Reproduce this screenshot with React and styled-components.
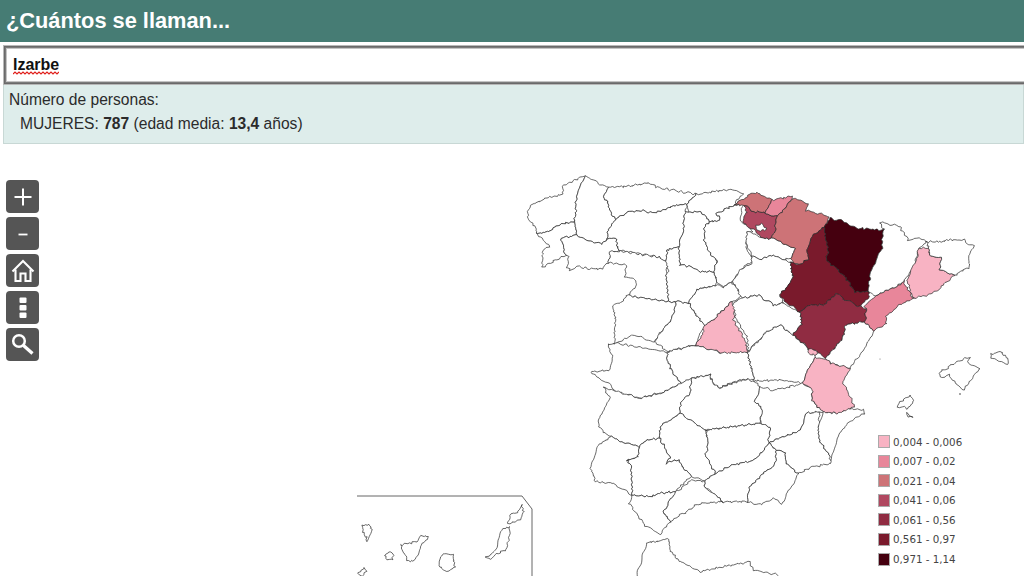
import React from 'react';
import styled, { createGlobalStyle } from 'styled-components';

const GlobalStyle = createGlobalStyle`
  html, body { margin: 0; padding: 0; height: 100%; background: #fff; overflow: hidden; }
  #root { height: 100%; }
`;

const Page = styled.div`
  display: flex;
  flex-direction: column;
  height: 576px;
  overflow: hidden;
  font-family: "Liberation Sans", Arial, sans-serif;
  color: #2b2b2b;
`;

const Header = styled.h1`
  margin: 0;
  height: 42px;
  padding: 0 6px;
  display: flex;
  align-items: center;
  background: #467c74;
  color: #fff;
  font-size: 21.8px;
  font-weight: bold;
  flex: none;
`;

const SearchWrap = styled.div`
  position: relative;
  flex: none;
  margin: 3px 0 0 3px;
  width: 1040px;
  height: 40px;
`;

const SearchBox = styled.input`
  display: block;
  box-sizing: border-box;
  width: 100%;
  height: 100%;
  padding: 0 9px;
  border: 1px solid #b8b8b8;
  box-shadow: inset 0 0 0 1px #6a6a6a, inset 0 0 0 2px #7c7c7c, inset 0 0 0 3px #c4c4c4;
  outline: none;
  background: #fff;
  color: #111;
  font-family: inherit;
  font-size: 16px;
  font-weight: bold;
`;

const SpellMark = styled.svg`
  position: absolute;
  left: 10px;
  top: 26px;
  width: 46px;
  height: 4px;
`;

const Results = styled.div`
  flex: none;
  box-sizing: border-box;
  margin-left: 3px;
  height: 59px;
  padding: 3px 5px;
  background: #deedeb;
  border: 1px solid #c8d8d5;
  border-top: none;
  font-size: 15.6px;
  line-height: 24px;
`;

const ResultRow = styled.div`
  padding-left: ${props => props.$indent || 0}px;
`;

const MapArea = styled.div`
  position: relative;
  flex: 1;
  overflow: hidden;
`;

const MapSvg = styled.svg`
  position: absolute;
  inset: 0;
  width: 1024px;
  height: 432px;
`;

const Controls = styled.div`
  position: absolute;
  left: 6px;
  top: 36px;
  display: flex;
  flex-direction: column;
  gap: 4px;
`;

const ControlButton = styled.button`
  width: 33px;
  height: 33px;
  padding: 0;
  border: none;
  border-radius: 4px;
  background: #555;
  display: flex;
  align-items: center;
  justify-content: center;
`;

const Legend = styled.ul`
  position: absolute;
  left: 878px;
  top: 291px;
  margin: 0;
  padding: 0;
  list-style: none;
  display: flex;
  flex-direction: column;
  gap: 6.6px;
`;

const LegendItem = styled.li`
  display: flex;
  align-items: center;
  gap: 3px;
  height: 13px;
  font-family: "DejaVu Sans", Verdana, sans-serif;
  font-size: 10.3px;
  color: #444;
  white-space: nowrap;
`;

const Swatch = styled.span`
  box-sizing: border-box;
  width: 12px;
  height: 13px;
  background: ${props => props.$color};
  border: 1px solid #aaa;
`;

const C1 = '#f8b3c3';
const C2 = '#e8869a';
const C3 = '#cd7377';
const C4 = '#b04860';
const C5 = '#902c42';
const C6 = '#7a1a2c';
const C7 = '#45000f';

const LEGEND = [
  [C1, '0,004 - 0,006'],
  [C2, '0,007 - 0,02'],
  [C3, '0,021 - 0,04'],
  [C4, '0,041 - 0,06'],
  [C5, '0,061 - 0,56'],
  [C6, '0,561 - 0,97'],
  [C7, '0,971 - 1,14'],
];

// coordinate frames: traced at 3x from different parts of the map
const NW = [520, 170, 1 / 3];
const NE = [730, 170, 1 / 3];
const SO = [580, 360, 1 / 3];
const CA = [350, 480, 1 / 3];
const BA = [860, 340, 1 / 3];
const PX = [0, 0, 1];

const REGIONS = [
  // north west
  [NW, '#fff', '25,125 30,105 60,95 80,85 130,70 130,45 180,25 195,17 170,80 165,152 120,165 85,185 50,190 45,170 25,150'],
  [NW, '#fff', '50,190 85,185 120,165 165,152 172,195 123,205 135,250 140,255 68,292 70,240 90,230 65,205'],
  [NW, '#fff', '195,17 170,80 165,152 172,195 215,215 245,222 262,205 265,175 285,148 270,125 265,100 250,80 265,52 235,40'],
  [NW, '#fff', '172,195 123,205 135,250 145,260 140,290 150,300 172,290 215,297 245,295 265,278 270,250 295,240 290,205 262,205 245,222 215,215'],
  [NW, '#fff', '265,52 250,80 265,100 270,125 285,148 330,125 370,122 400,130 450,112 500,100 530,73 410,52 390,38 330,48'],
  [NW, '#fff', '285,148 265,175 262,205 290,205 295,240 420,262 440,275 440,240 475,232 490,180 495,125 500,100 450,112 400,130 370,122 330,125'],
  [NW, '#fff', '530,73 500,100 505,127 540,125 570,155 600,150 590,130 620,115 670,100 645,100 670,72 640,58 600,62'],
  [NW, '#fff', '505,127 495,125 490,180 475,232 480,285 510,290 540,305 580,305 585,285 595,275 570,250 552,210 555,170 570,155 540,125'],
  [NW, '#fff', '570,155 555,170 552,210 570,250 595,275 585,285 580,305 590,335 610,350 635,335 660,300 700,270 680,240 680,190 700,185 680,165 660,150 670,100 620,115 590,130 600,150'],
  [NW, '#fff', '270,245 265,278 320,285 315,320 350,330 345,350 325,377 375,385 445,395 440,310 445,280 420,262 300,243'],
  [NW, '#fff', '440,275 445,300 440,310 445,395 470,395 505,400 530,360 585,345 590,335 580,305 540,305 510,290 480,285 475,232 440,240'],
  [NW, '#fff', '325,377 280,410 285,445 285,520 340,495 400,515 430,480 465,425 470,395 445,395 375,385'],
  [NW, '#fff', '470,395 465,425 430,480 405,515 440,545 525,525 555,470 505,400'],
  [NW, '#fff', '505,400 555,470 590,440 635,395 670,375 635,335 610,350 585,345 530,360'],
  [NW, C1, '635,395 590,440 552,470 550,495 525,525 610,550 600,570 685,545 670,500 640,450 645,410'],
  // centre
  [PX, '#fff', '667,352 695,345 723,353 748,352 754,380 743,379 720,388 713,383 710,375 692,378 682,384 673,373 667,360'],
  [PX, '#fff', '748,352 752,347 767,332 780,325 793,335 807,347 815,354 815,357 807,373 803,383 780,380 753,381 754,380'],
  [PX, '#fff', '608,345 615,343 667,352 667,360 673,373 682,384 660,393 640,398 616,392 610,385 590,372 610,370 613,357'],
  // south
  [SO, '#fff', '70,80 110,95 180,115 240,100 305,70 335,55 330,100 305,125 300,160 240,200 240,235 200,240 175,262 92,232 55,200 60,170 90,115'],
  [SO, '#fff', '335,55 390,45 400,70 420,85 490,58 520,62 540,80 525,125 548,150 540,190 420,205 375,210 300,160 305,125 330,100'],
  [SO, '#fff', '540,80 580,90 610,85 670,70 700,90 695,120 730,155 680,160 660,210 600,235 565,250 570,205 540,188 548,150 525,125'],
  [SO, '#fff', '565,250 600,235 660,210 680,160 720,155 715,200 720,245 745,280 755,310 700,320 655,340 620,310 615,280 590,270'],
  [SO, '#fff', '730,155 770,160 800,145 850,150 855,160 800,190 775,235 750,300 745,280 720,245 715,200'],
  [SO, '#fff', '240,200 300,160 375,210 385,240 378,285 405,340 375,365 335,350 305,320 295,298 258,310 270,295 240,235'],
  [SO, '#fff', '92,232 60,250 32,320 45,365 100,370 155,405 155,320 140,300 175,290 175,262'],
  [SO, '#fff', '175,262 200,240 240,235 270,295 258,310 295,298 305,320 335,350 310,370 285,395 240,400 205,410 155,405 155,320 140,300 175,290'],
  [SO, '#fff', '378,210 420,205 540,190 570,205 565,250 525,300 460,315 405,340 378,285 385,240'],
  [SO, '#fff', '405,340 460,315 525,300 565,250 590,270 585,315 550,340 510,380 500,425 430,425 400,400 375,380 375,365'],
  [SO, '#fff', '590,270 615,280 620,310 655,340 630,390 605,430 580,415 545,435 500,425 510,380 550,340 585,315'],
  [SO, '#fff', '270,485 250,455 270,420 290,395 335,360 375,365 375,385 400,400 430,425 360,430 310,460'],
  [SO, '#fff', '155,405 205,410 240,400 285,395 270,420 250,455 270,485 240,522 200,500 160,450 148,430'],
  // north east
  [NE, '#fff', '50,185 100,205 125,205 195,235 180,265 165,270 130,255 90,270 65,255 50,225'],
  [NE, '#fff', '65,255 90,270 130,255 165,270 180,275 190,320 170,355 150,375 160,400 130,405 85,375 35,385 10,335 35,295 65,280'],
  [NE, '#fff', '10,400 35,385 85,375 130,405 160,400 210,425 215,465 190,495 150,465 110,485 65,530 55,545 50,500 15,440'],
  [NE, C3, '15,105 40,85 65,70 90,70 125,90 105,128 70,125 45,105'],
  [NE, C4, '45,105 70,125 105,128 140,140 135,180 125,205 100,205 70,180 35,155 50,130'],
  [NE, '#fff', '75,168 95,162 110,172 105,182 85,180'],
  [NE, C2, '125,90 190,78 175,100 140,140 105,128'],
  [NE, C3, '190,85 235,100 225,120 300,140 285,170 250,195 230,240 235,270 205,285 180,265 195,235 125,205 135,180 140,140 175,100'],
  [NE, C6, '285,170 285,205 295,230 290,270 345,320 375,365 415,365 415,385 385,410 340,385 320,370 285,405 240,405 210,425 165,395 150,375 170,355 190,320 180,275 205,285 235,270 230,240 250,195'],
  [NE, C7, '300,145 345,155 385,175 460,180 455,240 420,320 415,365 375,365 345,320 290,270 295,230 285,205 285,170'],
  [NE, C5, '210,425 240,405 285,405 320,370 340,385 385,410 410,415 405,455 345,465 345,490 310,540 290,565 262,545 230,530 190,495 215,465'],
  [NE, C1, '230,535 262,545 262,553 240,555'],
  [NE, '#fff', '345,465 405,455 430,480 420,500 395,550 360,595 300,580 290,565 310,540 345,490'],
  [NE, C2, '405,410 440,375 500,350 520,335 550,385 500,410 470,440 470,460 430,480 405,455 410,415'],
  [NE, '#fff', '450,155 510,170 535,210 565,205 590,215 565,235 555,290 525,330 500,350 440,375 415,365 420,320 455,240 460,180'],
  [NE, C1, '530,330 560,270 565,235 595,235 600,255 635,265 630,300 675,315 610,370 550,385'],
  [NE, '#fff', '590,215 625,215 660,210 700,210 730,230 715,260 720,290 675,315 630,300 635,265 600,255 595,235'],
  [PX, C1, '815,357 827,360 830,363 850,368 843,382 855,407 837,413 823,412 812,400 813,390 803,383 807,373'],
  // islands
  [BA, '#fff', '235,100 275,75 315,55 328,52 325,70 358,85 340,115 310,148 285,130 265,105 245,115'],
  [BA, '#fff', '392,42 425,35 448,65 440,75 395,55'],
  [BA, '#fff', '118,185 150,168 163,178 145,205 115,200'],
  [BA, '#fff', '137,215 145,230 158,230 145,222'],
  [CA, '#fff', '515,75 520,100 510,118 475,130 480,105 510,90'],
  [CA, '#fff', '460,145 480,143 470,210 435,225 425,238 405,232 435,215 445,180'],
  [CA, '#fff', '150,195 200,185 210,170 235,168 210,205 195,240 175,243 160,215'],
  [CA, '#fff', '105,225 117,214 130,225 128,238 112,240'],
  [CA, '#fff', '280,220 310,225 315,260 290,277 265,255 270,235'],
  [CA, '#fff', '35,135 62,135 65,150 52,183 38,150'],
  [CA, '#fff', '20,278 45,262 48,275 35,287'],
];

const AFRICA = [SO, '170,648 200,550 245,540 265,538 270,570 300,605 360,635 430,620 510,605 520,630 595,645'];
const CANARY_FRAME = '357,496 522,496 532,509 532,576';

// wobble the straight traced edges by a field of the position, so that two
// provinces sharing an edge get the same coast-like line
function wobble(x, y) {
  const dx = 0.7 * Math.sin(x * 2.9 + y * 1.3) + 0.5 * Math.sin(x * 1.1 - y * 3.7);
  const dy = 0.7 * Math.sin(y * 3.1 - x * 1.4) + 0.5 * Math.cos(x * 4.3 + y * 0.9);
  return [x + dx, y + dy];
}

function toPoints([ox, oy, s], raw) {
  return raw.split(' ').map(p => {
    const [x, y] = p.split(',').map(Number);
    return [ox + x * s, oy + y * s];
  });
}

function roughen(pts, closed) {
  const out = [];
  const last = closed ? pts.length : pts.length - 1;
  for (let i = 0; i < last; i++) {
    const a = pts[i];
    const b = pts[(i + 1) % pts.length];
    const steps = Math.max(1, Math.round(Math.hypot(b[0] - a[0], b[1] - a[1]) / 1.8));
    for (let k = 0; k < steps; k++) {
      const t = k / steps;
      out.push(wobble(a[0] + (b[0] - a[0]) * t, a[1] + (b[1] - a[1]) * t));
    }
  }
  if (!closed) out.push(wobble(...pts[pts.length - 1]));
  return out.map(p => `${p[0].toFixed(1)},${p[1].toFixed(1)}`).join(' ');
}

function SpainMap() {
  return (
    <MapSvg viewBox="0 144 1024 432">
      <g stroke="#2a2a2a" strokeWidth="0.7" strokeLinejoin="round">
        {REGIONS.map(([frame, fill, raw], i) => (
          <polygon key={i} fill={fill} points={roughen(toPoints(frame, raw), true)} />
        ))}
        <polyline fill="none" points={roughen(toPoints(AFRICA[0], AFRICA[1]), false)} />
      </g>
      <polyline fill="none" stroke="#666" strokeWidth="1" points={CANARY_FRAME} />
      <circle cx="960" cy="394" r="0.8" fill="#333" />
      <circle cx="880" cy="359" r="0.5" fill="#555" />
    </MapSvg>
  );
}

const PlusIcon = () => (
  <svg width="20" height="20" viewBox="0 0 20 20">
    <path d="M10 1.5v17M1.5 10h17" stroke="#fff" strokeWidth="2" />
  </svg>
);

const MinusIcon = () => (
  <svg width="20" height="20" viewBox="0 0 20 20">
    <path d="M5.5 10.5h9" stroke="#fff" strokeWidth="1.8" />
  </svg>
);

const HomeIcon = () => (
  <svg width="24" height="24" viewBox="0 0 24 24" fill="none" stroke="#fff" strokeWidth="2.1">
    <path d="M1.5 12.5 12 2l10.5 10.5" />
    <path d="M4.5 10.5V22h5v-7.5h5V22h5V10.5" />
  </svg>
);

const DotsIcon = () => (
  <svg width="8" height="22" viewBox="0 0 8 22" fill="#fff">
    <rect x="0.5" y="0.5" width="7" height="5.6" rx="1" />
    <rect x="0.5" y="8" width="7" height="5.6" rx="1" />
    <rect x="0.5" y="15.5" width="7" height="5.6" rx="1" />
  </svg>
);

const SearchIcon = () => (
  <svg width="24" height="24" viewBox="0 0 24 24" fill="none" stroke="#fff">
    <circle cx="8" cy="8" r="5.8" strokeWidth="2.5" />
    <path d="M12.5 12.5 21.5 20.5" strokeWidth="3.2" />
  </svg>
);

export default function App() {
  return (
    <Page>
      <GlobalStyle />
      <Header>¿Cuántos se llaman...</Header>
      <SearchWrap>
        <SearchBox value="Izarbe" readOnly />
        <SpellMark viewBox="0 0 46 4">
          <path
            d="M0 3 2 1 4 3 6 1 8 3 10 1 12 3 14 1 16 3 18 1 20 3 22 1 24 3 26 1 28 3 30 1 32 3 34 1 36 3 38 1 40 3 42 1 44 3 46 1"
            fill="none"
            stroke="#e0201c"
            strokeWidth="1.2"
          />
        </SpellMark>
      </SearchWrap>
      <Results>
        <ResultRow>Número de personas:</ResultRow>
        <ResultRow $indent={11}>
          MUJERES: <b>787</b> (edad media: <b>13,4</b> años)
        </ResultRow>
      </Results>
      <MapArea>
        <SpainMap />
        <Controls>
          <ControlButton><PlusIcon /></ControlButton>
          <ControlButton><MinusIcon /></ControlButton>
          <ControlButton><HomeIcon /></ControlButton>
          <ControlButton><DotsIcon /></ControlButton>
          <ControlButton><SearchIcon /></ControlButton>
        </Controls>
        <Legend>
          {LEGEND.map(([color, label]) => (
            <LegendItem key={label}>
              <Swatch $color={color} />
              {label}
            </LegendItem>
          ))}
        </Legend>
      </MapArea>
    </Page>
  );
}
